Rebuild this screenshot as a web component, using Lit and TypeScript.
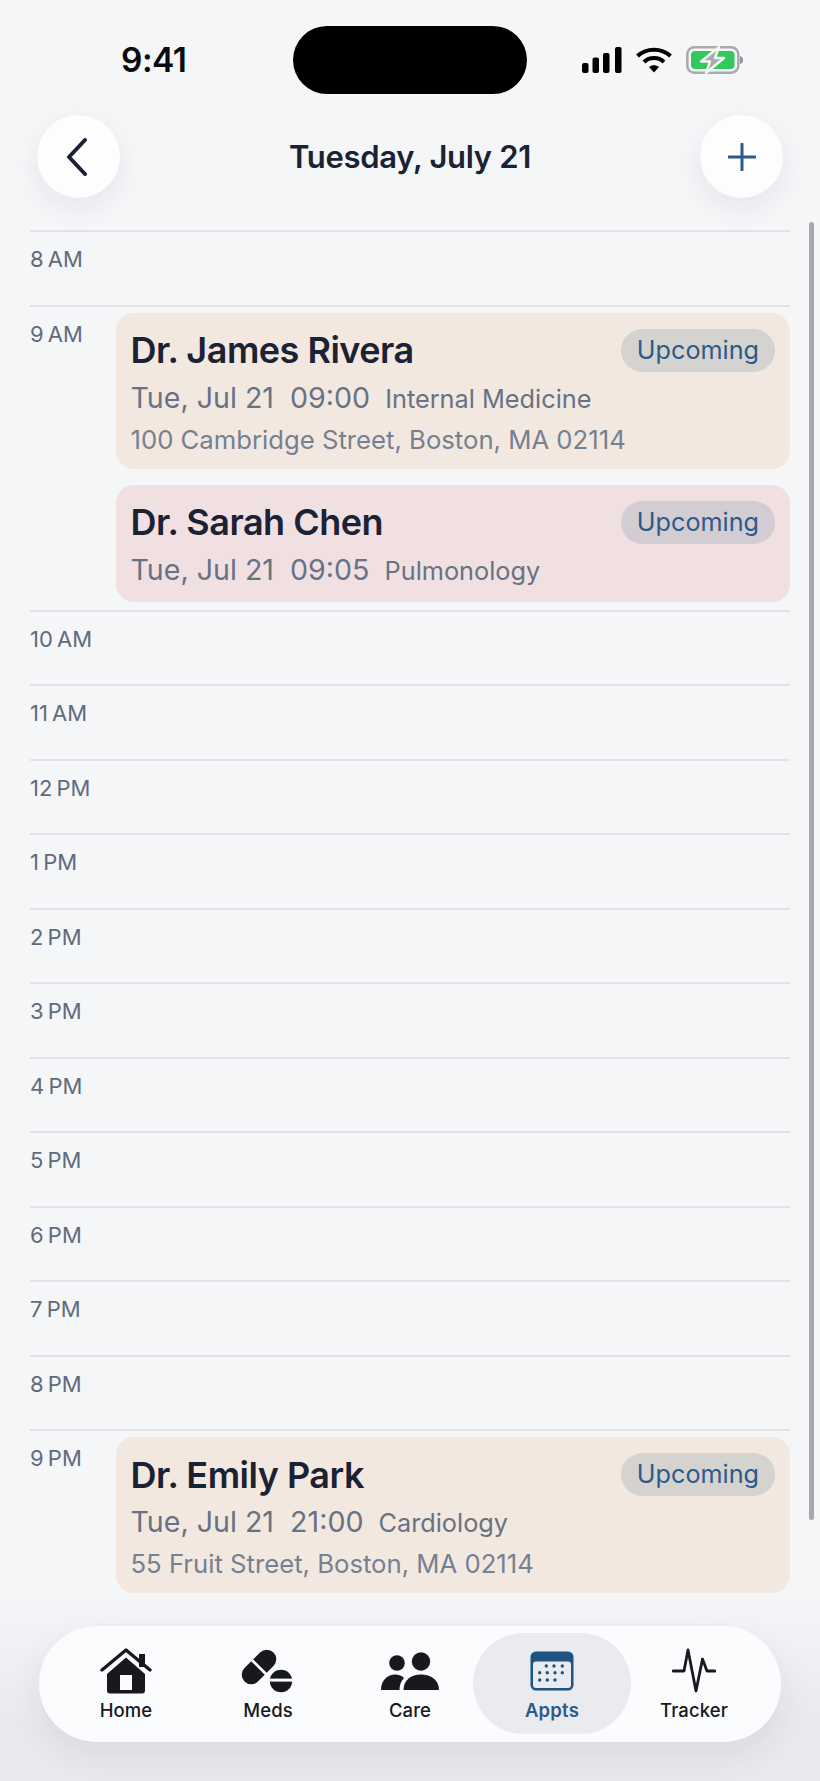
import { LitElement, html, css, svg } from "lit";
import { customElement } from "lit/decorators.js";
import { map } from "lit/directives/map.js";

type Appt = {
    doctor: string,
    date: string,
    time: string,
    specialty: string,
    address?: string,
    tone: "sand" | "rose"
}

type Slot = {
    label: string,
    appts: Appt[]
}

const SLOTS: Slot[] = [
    { label: "8 AM", appts: [] },
    { label: "9 AM", appts: [
        { doctor: "Dr. James Rivera", date: "Tue, Jul 21", time: "09:00", specialty: "Internal Medicine", address: "100 Cambridge Street, Boston, MA 02114", tone: "sand" },
        { doctor: "Dr. Sarah Chen", date: "Tue, Jul 21", time: "09:05", specialty: "Pulmonology", tone: "rose" },
    ] },
    ...["10 AM", "11 AM", "12 PM", "1 PM", "2 PM", "3 PM", "4 PM", "5 PM", "6 PM", "7 PM", "8 PM"].map((label) => ({ label, appts: [] })),
    { label: "9 PM", appts: [
        { doctor: "Dr. Emily Park", date: "Tue, Jul 21", time: "21:00", specialty: "Cardiology", address: "55 Fruit Street, Boston, MA 02114", tone: "sand" },
    ] },
]

const homeIcon = svg`<svg width="52" height="48" viewBox="0 0 52 48">
    <rect x="39" y="7" width="6" height="13" fill="#17191d"/>
    <path d="M2 23 L26 3 L50 23" fill="none" stroke="#17191d" stroke-width="3.4" stroke-linecap="round" stroke-linejoin="round"/>
    <path d="M7 27 L26 10.500 L45 27 V43.500 q0 3 -3 3 H10 q-3 0 -3 -3 Z" fill="#17191d"/>
    <rect x="20" y="28" width="12" height="15" fill="#fbfcfe"/>
</svg>`

const medsIcon = svg`<svg width="56" height="48" viewBox="0 0 56 48">
    <g transform="rotate(-45 19 20)">
        <rect x="-1.500" y="10.500" width="41" height="19" rx="9.500" fill="#17191d"/>
        <rect x="17.500" y="9" width="2.800" height="22" fill="#fbfcfe"/>
    </g>
    <circle cx="41" cy="34" r="11.200" fill="#17191d"/>
    <rect x="28" y="31.600" width="26" height="3" fill="#fbfcfe"/>
</svg>`

const careIcon = svg`<svg width="60" height="48" viewBox="0 0 60 48">
    <circle cx="17" cy="16" r="7.800" fill="#17191d"/>
    <circle cx="41" cy="14.500" r="9.200" fill="#17191d"/>
    <path d="M1 43 C1 33 8 27.500 15 27.500 C19 27.500 22 29 24 31 C21 34 19.500 38 19.500 43 Z" fill="#17191d"/>
    <path d="M23.500 43 C23.500 33 31 27.500 41 27.500 C51 27.500 59 33 59 43 Z" fill="#17191d"/>
</svg>`

const calendarDots = [
    [16.3, 15], [24, 15], [32.3, 15],
    [9.7, 21.7], [17.3, 21.7], [25, 21.7], [32.3, 21.7],
    [9.7, 29], [17.3, 29], [25, 29],
]

const apptsIcon = svg`<svg width="44" height="40" viewBox="0 0 44 40">
    <rect x="0.500" y="0.500" width="43" height="39" rx="5.500" fill="#1f5585"/>
    <rect x="3" y="10.500" width="38" height="26.500" rx="3" fill="#e9ebee"/>
    ${calendarDots.map(([x, y]) => svg`<circle cx=${x} cy=${y} r="1.700" fill="#1f5585"/>`)}
</svg>`

const trackerIcon = svg`<svg width="44" height="46" viewBox="0 0 44 46">
    <path d="M1 23 H12 L16 2 L24 43 L30.500 11 L35 23 H43" fill="none" stroke="#17191d" stroke-width="2.800" stroke-linecap="round" stroke-linejoin="round"/>
</svg>`

const NAV = [
    { label: "Home", icon: homeIcon },
    { label: "Meds", icon: medsIcon },
    { label: "Care", icon: careIcon },
    { label: "Appts", icon: apptsIcon, active: true },
    { label: "Tracker", icon: trackerIcon },
]

@customElement("app-root")
export class AppRoot extends LitElement{
    static styles = css`
    :host{
        display: block;
        position: relative;
        width: 820px;
        height: 1781px;
        overflow: hidden;
        background-color: #f5f6f8;
        font-family: Inter, "Liberation Sans", sans-serif;
        color: #1a2233;
    }

    .status{
        display: grid;
        grid-template-columns: 1fr 234px 1fr;
        align-items: center;
        height: 68px;
        padding-top: 26px;
        margin-bottom: 21px;
    }

    .clock{
        padding-left: 121px;
        font-size: 33.500px;
        font-weight: 600;
        color: #0b0c0e;
        letter-spacing: -0.5px;
    }

    .island{
        height: 68px;
        border-radius: 34px;
        background-color: #000000;
    }

    .status-icons{
        display: flex;
        align-items: center;
        gap: 14px;
        padding-left: 55px;
    }

    .status-icons svg{
        display: block;
    }

    .topbar{
        display: flex;
        align-items: center;
        justify-content: space-between;
        padding: 0 37px;
        margin-bottom: 32px;
    }

    .round{
        display: flex;
        align-items: center;
        justify-content: center;
        width: 83px;
        height: 83px;
        border-radius: 50%;
        background-color: #fdfdfe;
        box-shadow: 0 10px 28px rgba(20, 30, 50, 0.07);
    }

    .back{
        margin-left: -4px;
    }

    .title{
        font-size: 31px;
        font-weight: 600;
        letter-spacing: -0.3px;
    }

    .slot{
        display: grid;
        grid-template-columns: 86px 1fr;
        box-sizing: border-box;
        min-height: 74.500px;
        margin: 0 30px;
        padding-top: 6px;
        border-top: 2px solid #e2e3e6;
    }

    .hour{
        padding-top: 8px;
        font-size: 22px;
        line-height: 27px;
        word-spacing: -2px;
        color: #5f6b7c;
    }

    .cards{
        display: flex;
        flex-direction: column;
        gap: 16px;
        padding-bottom: 8px;
    }

    .card{
        padding: 16px 15px 14px 14.500px;
        border-radius: 18px;
    }

    .card.sand{
        background-color: #f3e8df;
    }

    .card.rose{
        background-color: #f1e0e2;
    }

    .head{
        display: flex;
        align-items: center;
        justify-content: space-between;
        height: 43px;
    }

    .doctor{
        font-size: 36px;
        font-weight: 600;
        letter-spacing: -0.5px;
    }

    .pill{
        padding: 0 16px;
        height: 43px;
        line-height: 42px;
        border-radius: 22px;
        font-size: 25.200px;
        color: #2c5a8a;
        background-color: rgba(60, 108, 135, 0.17);
    }

    .when{
        display: flex;
        align-items: baseline;
        gap: 15px;
        margin-top: 8px;
        height: 36px;
        color: #677285;
        line-height: 36px;
    }

    .date{
        font-size: 28.600px;
    }

    .specialty{
        font-size: 25.300px;
    }

    .address{
        margin-top: 8px;
        font-size: 25.700px;
        line-height: 31px;
        color: #748093;
    }

    .scrollbar{
        position: absolute;
        left: 808.500px;
        top: 222px;
        width: 5.500px;
        height: 1298px;
        border-radius: 3px;
        background-color: #a6a8ab;
    }

    .fade{
        position: absolute;
        left: 0;
        right: 0;
        bottom: 0;
        height: 190px;
        background: linear-gradient(to bottom, rgba(232, 233, 236, 0), #e9eaed 70%);
    }

    .nav{
        position: absolute;
        left: 39px;
        top: 1626px;
        width: 742px;
        height: 116px;
        box-sizing: border-box;
        padding: 7px 16px 8px 16px;
        display: grid;
        grid-template-columns: repeat(5, 142px);
        border-radius: 58px;
        background-color: #fbfcfe;
        box-shadow: 0 14px 36px rgba(30, 35, 50, 0.08);
    }

    .tab{
        display: flex;
        flex-direction: column;
        align-items: center;
        font-size: 18.500px;
        font-weight: 500;
        letter-spacing: 0.1px;
        color: #17191d;
    }

    .tab .glyph{
        display: flex;
        align-items: center;
        justify-content: center;
        height: 48px;
        margin-top: 14px;
    }

    .tab span{
        margin-top: 4px;
    }

    .tab.active{
        margin: 0 -8px;
        border-radius: 51px;
        background-color: #e9ebee;
        color: #2c5a8a;
        font-weight: 600;
        letter-spacing: 0.2px;
    }
    `

    render(){
        return html`
        <div class="status">
            <div class="clock">9:41</div>
            <div class="island"></div>
            <div class="status-icons">
                <svg width="40" height="26" viewBox="0 0 40 26">
                    <rect x="0" y="16" width="6.500" height="10" rx="2" fill="#000"/>
                    <rect x="10.500" y="10.500" width="6.500" height="15.500" rx="2" fill="#000"/>
                    <rect x="21" y="6" width="6.500" height="20" rx="2" fill="#000"/>
                    <rect x="33" y="0" width="6.500" height="26" rx="2" fill="#000"/>
                </svg>
                <svg width="36" height="26" viewBox="0 0 36 26">
                    <path d="M1.500 9 C10.500 0.500 25.500 0.500 34.500 9" fill="none" stroke="#000" stroke-width="4"/>
                    <path d="M8 15 C13.500 9.800 22.500 9.800 28 15" fill="none" stroke="#000" stroke-width="4"/>
                    <path d="M13 20 L18 25.500 L23 20 C20 17.500 16 17.500 13 20 Z" fill="#000"/>
                </svg>
                <svg width="58" height="28" viewBox="0 0 58 28">
                    <rect x="1.300" y="1.300" width="51" height="25.400" rx="7" fill="none" stroke="#a9abad" stroke-width="2.600"/>
                    <rect x="5" y="5" width="43.500" height="18" rx="4" fill="#34c759"/>
                    <path d="M54 10 q3 1 3 4 q0 3 -3 4 Z" fill="#8f9194"/>
                    <path d="M33 1 L15 15.500 H24 L20 27 L38 12 H29 Z" fill="#a9abad" stroke="#f5f6f8" stroke-width="2.400" stroke-linejoin="round"/>
                </svg>
            </div>
        </div>

        <div class="topbar">
            <div class="round">
                <svg class="back" width="24" height="38" viewBox="0 0 24 38">
                    <path d="M20 2 L4 19 L20 36" fill="none" stroke="#1a2233" stroke-width="4" stroke-linecap="round" stroke-linejoin="round"/>
                </svg>
            </div>
            <div class="title">Tuesday, July 21</div>
            <div class="round">
                <svg width="28" height="28" viewBox="0 0 28 28">
                    <path d="M14 1 V27 M1 14 H27" fill="none" stroke="#2c5a8a" stroke-width="3" stroke-linecap="round"/>
                </svg>
            </div>
        </div>

        ${map(SLOTS, (slot) => html`
        <div class="slot">
            <div class="hour">${slot.label}</div>
            <div class="cards">
                ${map(slot.appts, (appt) => html`
                <div class="card ${appt.tone}">
                    <div class="head">
                        <div class="doctor">${appt.doctor}</div>
                        <div class="pill">Upcoming</div>
                    </div>
                    <div class="when">
                        <span class="date">${appt.date}&nbsp; ${appt.time}</span>
                        <span class="specialty">${appt.specialty}</span>
                    </div>
                    ${appt.address ? html`<div class="address">${appt.address}</div>` : ""}
                </div>
                `)}
            </div>
        </div>
        `)}

        <div class="scrollbar"></div>
        <div class="fade"></div>

        <div class="nav">
            ${map(NAV, (tab) => html`
            <div class="tab ${tab.active ? "active" : ""}">
                <div class="glyph">${tab.icon}</div>
                <span>${tab.label}</span>
            </div>
            `)}
        </div>
        `
    }
}
